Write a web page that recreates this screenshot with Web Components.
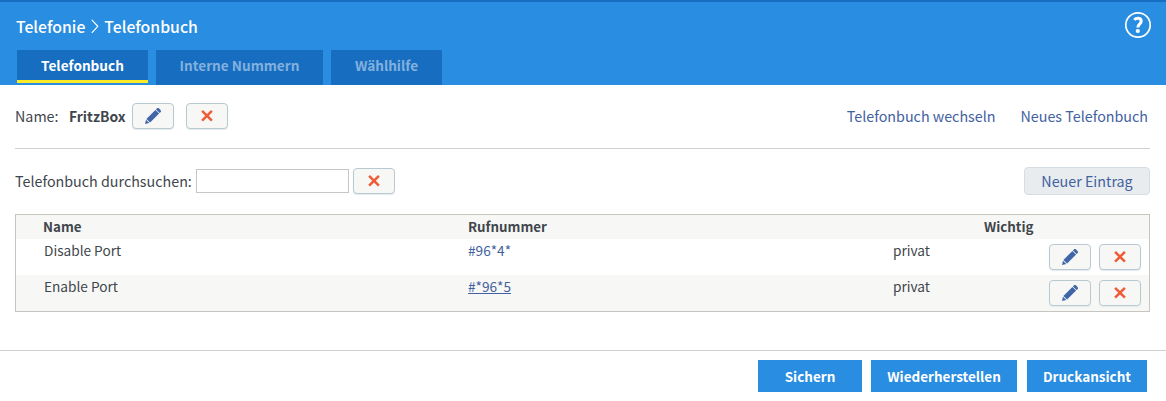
<!DOCTYPE html>
<html lang="de">
<head>
<meta charset="utf-8">
<title>Telefonbuch</title>
<style>
html,body{margin:0;height:401px;overflow:hidden;background:#fff}
body{font:14.3px/20px "Noto Sans CJK SC","Noto Sans",sans-serif;color:#3f464c}
</style>
</head>
<body>
<phone-page></phone-page>
<script>
const define = (name, html) => {
  const template = document.createElement('template');
  template.innerHTML = html;
  customElements.define(name, class extends HTMLElement {
    constructor() {
      super();
      this.attachShadow({mode: 'open'}).append(template.content.cloneNode(true));
    }
  });
};

define('tab-item', `<style>
:host{display:flex;box-sizing:border-box;width:var(--w);height:35px;justify-content:center;padding-top:5px;background:#176dc0;color:#83b1de;font-weight:700;font-size:13.6px;white-space:nowrap}
:host([active]){height:33px;border-bottom:3px solid #fdea27;color:#fff}
</style><slot></slot>`);

define('page-header', `<style>
:host{display:flex;flex-direction:column;box-sizing:border-box;height:85px;border-top:2px solid #176dc0;background:#298de1;padding:0 14px 0 16px;color:#fff}
.top{display:flex;justify-content:space-between;height:48px}
.crumb{display:flex;font-size:15.8px;font-weight:500;line-height:22px;padding-top:14px;white-space:nowrap}
.crumb svg{margin:3px 5px 0 6px}
.help{margin-top:9px}
nav{display:flex;gap:8px;padding-left:1px}
</style>
<div class="top"><div class="crumb"><span>Telefonie</span><svg width="8" height="15"><path d="M.8.8 6.8 7.3.8 13.8" fill="none" stroke="#fff" stroke-width="1.2"/></svg><span>Telefonbuch</span></div>
<svg class="help" width="28" height="28"><circle cx="14" cy="14" r="12.2" fill="none" stroke="#fff" stroke-width="1.7"/><path d="M10.3 8.9C12.3 6.4 17.2 6.6 17.2 10.2c0 2.8-3.5 3-3.4 6.3" fill="none" stroke="#fff" stroke-width="3"/><circle cx="13.8" cy="20" r="2.1" fill="#fff"/></svg></div>
<nav><slot></slot></nav>`);

define('icon-button', `<style>
:host{display:flex;flex:none;box-sizing:border-box;width:42px;height:26px;border:1px solid #b9c9d2;border-radius:4px;background:#f7f8f6;box-shadow:0 1px 1px #e5eaed;align-items:center;justify-content:center}
svg{display:none}
:host([kind=edit]) .edit,:host([kind=delete]) .delete{display:block}
</style>
<svg class="edit" width="18" height="18"><g fill="#4066a8"><path d="M1 17 2 12.7 5.3 16z"/><path d="M2.4 11.9 11.4 2.9 15.1 6.6 6.1 15.6z"/><path d="M11.9 2.4 13.3 1H14.6L17 3.4V4.7L15.6 6.1z"/></g></svg>
<svg class="delete" width="18" height="18"><path d="M4.1 3.9 13.9 13.7M13.9 3.9 4.1 13.7" fill="none" stroke="#f15a36" stroke-width="2.5"/></svg>`);

define('text-link', `<style>
:host{color:#42619f;white-space:nowrap}
:host([underlined]) span{border-bottom:1px solid #42619f;display:inline-block;line-height:14px}
</style><span><slot></slot></span>`);

define('tool-row', `<style>
:host{display:flex;box-sizing:border-box;height:var(--h);margin:0 16px 0 15px;padding-bottom:1px;align-items:center;white-space:nowrap}
:host([ruled]){border-bottom:1px solid #d0d0d0}
.end{display:flex;margin-left:auto}
</style><slot></slot><div class="end"><slot name="end"></slot></div>`);

define('search-field', `<style>
:host{display:block}
input{display:block;box-sizing:border-box;width:153px;height:24px;margin:0;border:1px solid #c6c6c6;border-radius:0;background:#fff;outline:0}
</style><input type="text" aria-label="Suche">`);

define('soft-button', `<style>
:host{display:flex;box-sizing:border-box;width:126px;height:28px;border:1px solid #d6dde2;border-radius:4px;background:#e8ecef;color:#42619f;justify-content:center;line-height:26px}
</style><slot></slot>`);

define('contact-row', `<style>
:host{display:grid;grid-template-columns:424px 425px 150px 92px;padding-left:28px;height:36px;line-height:22px;white-space:nowrap;box-sizing:border-box;font-size:13.65px}
:host([shaded]){background:#f7f7f5}
.actions{display:flex;gap:8px;padding:5px 0 0 6px}
</style><slot name="name"></slot><span><slot name="number"></slot></span><slot name="kind"></slot>
<div class="actions"><icon-button kind="edit"></icon-button><icon-button kind="delete"></icon-button></div>`);

define('contact-table', `<style>
:host{display:block;box-sizing:border-box;height:98px;margin:0 16px 0 15px;border:1px solid #c5c6bf}
.head{display:grid;grid-template-columns:425px 425px 1fr;padding-left:27px;height:24px;line-height:24px;background:#f7f7f5;font-weight:700;font-size:13.35px}
.imp{padding-left:91px}
</style><div class="head"><span>Name</span><span>Rufnummer</span><span class="imp">Wichtig</span></div><slot></slot>`);

define('main-button', `<style>
:host{display:flex;box-sizing:border-box;width:var(--w);height:32px;line-height:33px;justify-content:center;background:#298de1;color:#fff;font-weight:700;font-size:13.5px;white-space:nowrap}
</style><slot></slot>`);

define('page-footer', `<style>
:host{display:flex;box-sizing:border-box;height:51px;margin-top:38px;border-top:1px solid #d0d0d0;padding:9px 19px 0 0;justify-content:flex-end}
</style><slot></slot>`);

define('phone-page', `<style>
:host{display:block}
.name{width:57px;margin:0 6px 0 10px;font-size:13.9px}
.gap{margin-left:12px}
.lbl{width:177px;margin-right:4px}
.lead{width:44px}
</style>
<page-header><tab-item active style="--w:131px">Telefonbuch</tab-item><tab-item style="--w:167px">Interne Nummern</tab-item><tab-item style="--w:111px">Wählhilfe</tab-item></page-header>
<tool-row ruled style="--h:64px"><span class="lead">Name:</span><b class="name">FritzBox</b><icon-button kind="edit"></icon-button><icon-button class="gap" kind="delete"></icon-button>
<text-link slot="end">Telefonbuch wechseln</text-link><text-link slot="end" style="margin:0 2px 0 25px">Neues Telefonbuch</text-link></tool-row>
<tool-row style="--h:65px"><span class="lbl">Telefonbuch durchsuchen:</span><search-field></search-field><icon-button kind="delete" style="margin-left:4px"></icon-button><soft-button slot="end">Neuer Eintrag</soft-button></tool-row>
<contact-table>
<contact-row><span slot="name">Disable Port</span><text-link slot="number">#96*4*</text-link><span slot="kind">privat</span></contact-row>
<contact-row shaded><span slot="name">Enable Port</span><text-link slot="number" underlined>#*96*5</text-link><span slot="kind">privat</span></contact-row>
</contact-table>
<page-footer><main-button style="--w:104px">Sichern</main-button><main-button style="--w:146px;margin-left:9px">Wiederherstellen</main-button><main-button style="--w:120px;margin-left:10px">Druckansicht</main-button></page-footer>`);
</script>
</body>
</html>
